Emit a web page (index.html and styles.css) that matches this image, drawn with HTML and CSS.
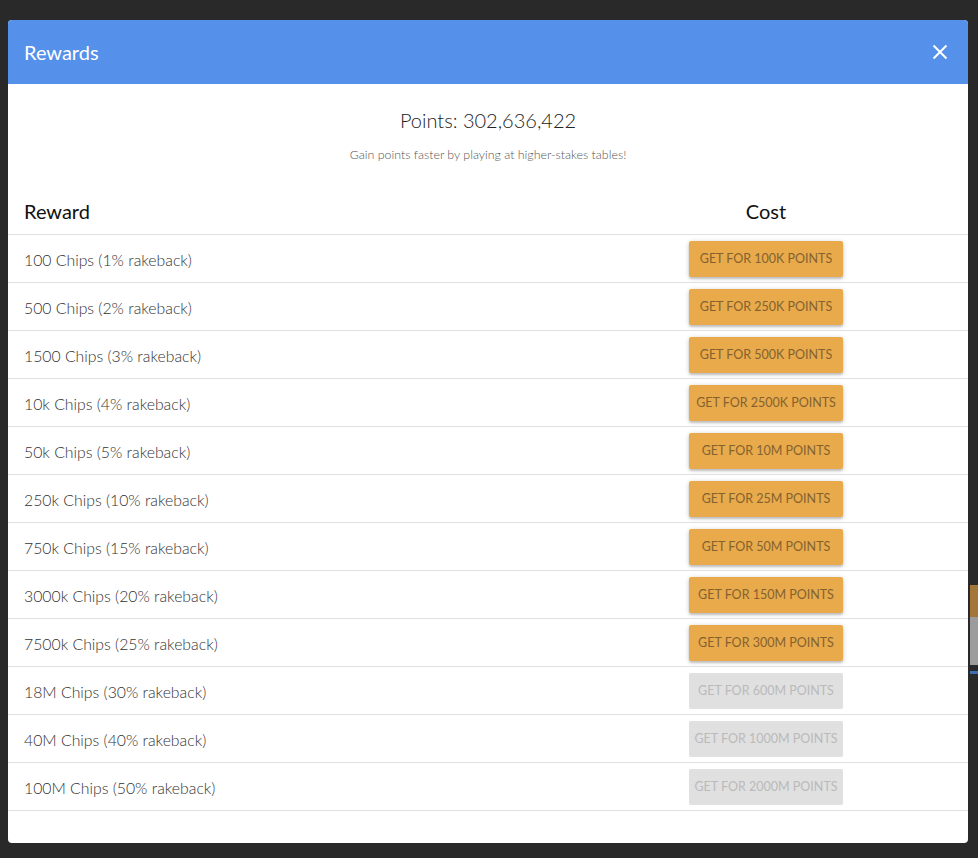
FILE: index.html
```html
<!DOCTYPE html>
<html lang="en">
<head>
<meta charset="utf-8">
<title>Rewards</title>
<link rel="stylesheet" href="styles.css">
</head>
<body>
<div class="backdrop-page">
  <div class="bg-peek">
    <div class="peek-orange"></div>
    <div class="peek-grey"></div>
    <div class="peek-gap"></div>
    <div class="peek-blue"></div>
  </div>
</div>
<div class="overlay">
  <div class="modal">
    <div class="modal-header">
      <span class="modal-title">Rewards</span>
      <button class="close-btn" aria-label="Close">
        <svg width="16" height="16" viewBox="0 0 16 16"><path d="M1.5 1.5 L14.5 14.5 M14.5 1.5 L1.5 14.5" stroke="#fff" stroke-width="2" fill="none"/></svg>
      </button>
    </div>
    <div class="modal-body">
      <div class="points">Points: 302,636,422</div>
      <div class="hint">Gain points faster by playing at higher-stakes tables!</div>
      <div class="table">
        <div class="row head"><div class="cell-reward">Reward</div><div class="cell-cost">Cost</div></div>
        <div class="row"><div class="cell-reward">100 Chips (1% rakeback)</div><div class="cell-cost"><button class="buy">GET FOR 100K POINTS</button></div></div>
        <div class="row"><div class="cell-reward">500 Chips (2% rakeback)</div><div class="cell-cost"><button class="buy">GET FOR 250K POINTS</button></div></div>
        <div class="row"><div class="cell-reward">1500 Chips (3% rakeback)</div><div class="cell-cost"><button class="buy">GET FOR 500K POINTS</button></div></div>
        <div class="row"><div class="cell-reward">10k Chips (4% rakeback)</div><div class="cell-cost"><button class="buy">GET FOR 2500K POINTS</button></div></div>
        <div class="row"><div class="cell-reward">50k Chips (5% rakeback)</div><div class="cell-cost"><button class="buy">GET FOR 10M POINTS</button></div></div>
        <div class="row"><div class="cell-reward">250k Chips (10% rakeback)</div><div class="cell-cost"><button class="buy">GET FOR 25M POINTS</button></div></div>
        <div class="row"><div class="cell-reward">750k Chips (15% rakeback)</div><div class="cell-cost"><button class="buy">GET FOR 50M POINTS</button></div></div>
        <div class="row"><div class="cell-reward">3000k Chips (20% rakeback)</div><div class="cell-cost"><button class="buy">GET FOR 150M POINTS</button></div></div>
        <div class="row"><div class="cell-reward">7500k Chips (25% rakeback)</div><div class="cell-cost"><button class="buy">GET FOR 300M POINTS</button></div></div>
        <div class="row"><div class="cell-reward">18M Chips (30% rakeback)</div><div class="cell-cost"><button class="buy disabled" disabled>GET FOR 600M POINTS</button></div></div>
        <div class="row"><div class="cell-reward">40M Chips (40% rakeback)</div><div class="cell-cost"><button class="buy disabled" disabled>GET FOR 1000M POINTS</button></div></div>
        <div class="row"><div class="cell-reward">100M Chips (50% rakeback)</div><div class="cell-cost"><button class="buy disabled" disabled>GET FOR 2000M POINTS</button></div></div>
      </div>
    </div>
  </div>
</div>
</body>
</html>
```

FILE: styles.css
```css
* { box-sizing: border-box; }
html, body { margin: 0; padding: 0; }
body {
  background: #292929;
  font-family: Lato, "Open Sans", Arial, sans-serif;
  width: 978px;
  height: 858px;
  overflow: hidden;
  position: relative;
}
.backdrop-page {
  position: absolute;
  inset: 0;
}
.bg-peek {
  position: absolute;
  left: 970px;
  top: 585px;
  width: 20px;
  display: flex;
  flex-direction: column;
}
.peek-orange { height: 32px; background: #a3773a; }
.peek-grey { height: 48px; background: #9c9c9c; }
.peek-gap { height: 6px; }
.peek-blue { height: 3px; background: #3e6fb4; }

.overlay {
  position: relative;
  padding: 20px 10px 15px 8px;
}
.modal {
  width: 960px;
  height: 823px;
  background: #fff;
  border-radius: 4px;
  overflow: hidden;
  display: flex;
  flex-direction: column;
}
.modal-header {
  height: 64px;
  background: #5591ea;
  display: flex;
  align-items: center;
  justify-content: space-between;
  padding: 0 20px 0 16px;
}
.modal-title {
  color: #fff;
  font-size: 20px;
  font-weight: 400;
}
.close-btn {
  background: none;
  border: 0;
  padding: 0;
  width: 16px;
  height: 16px;
  display: flex;
  cursor: pointer;
}
.modal-body {
  display: flex;
  flex-direction: column;
}
.points {
  margin-top: 24px;
  text-align: center;
  font-size: 20px;
  line-height: 24px;
  font-weight: 300;
  color: #222;
}
.hint {
  margin-top: 15px;
  text-align: center;
  font-size: 12.4px;
  line-height: 16px;
  font-weight: 300;
  color: #555;
}
.table {
  margin-top: 28px;
  display: flex;
  flex-direction: column;
}
.row {
  display: grid;
  grid-template-columns: 1fr 404px;
  height: 48px;
  align-items: center;
  border-bottom: 1px solid #e0e0e0;
}
.row.head {
  height: 44px;
  padding-bottom: 3px;
  font-size: 20px;
  font-weight: 400;
  color: #111;
}
.cell-reward {
  padding-left: 16px;
}
.row:not(.head) .cell-reward {
  font-size: 15.8px;
  font-weight: 300;
  color: #333;
  padding-top: 2px;
}
.cell-cost {
  display: flex;
  justify-content: center;
}
.buy {
  width: 154px;
  height: 36px;
  border: 0;
  border-radius: 2px;
  background: #e9aa4c;
  color: #84622f;
  font-family: Lato, "Open Sans", Arial, sans-serif;
  font-size: 12.5px;
  font-weight: 400;
  padding: 0;
  white-space: nowrap;
  box-shadow: 0 1px 5px rgba(0,0,0,0.2), 0 2px 2px rgba(0,0,0,0.14);
  cursor: pointer;
}
.buy.disabled {
  background: #e0e0e0;
  color: #bababa;
  box-shadow: none;
  cursor: default;
}
```
